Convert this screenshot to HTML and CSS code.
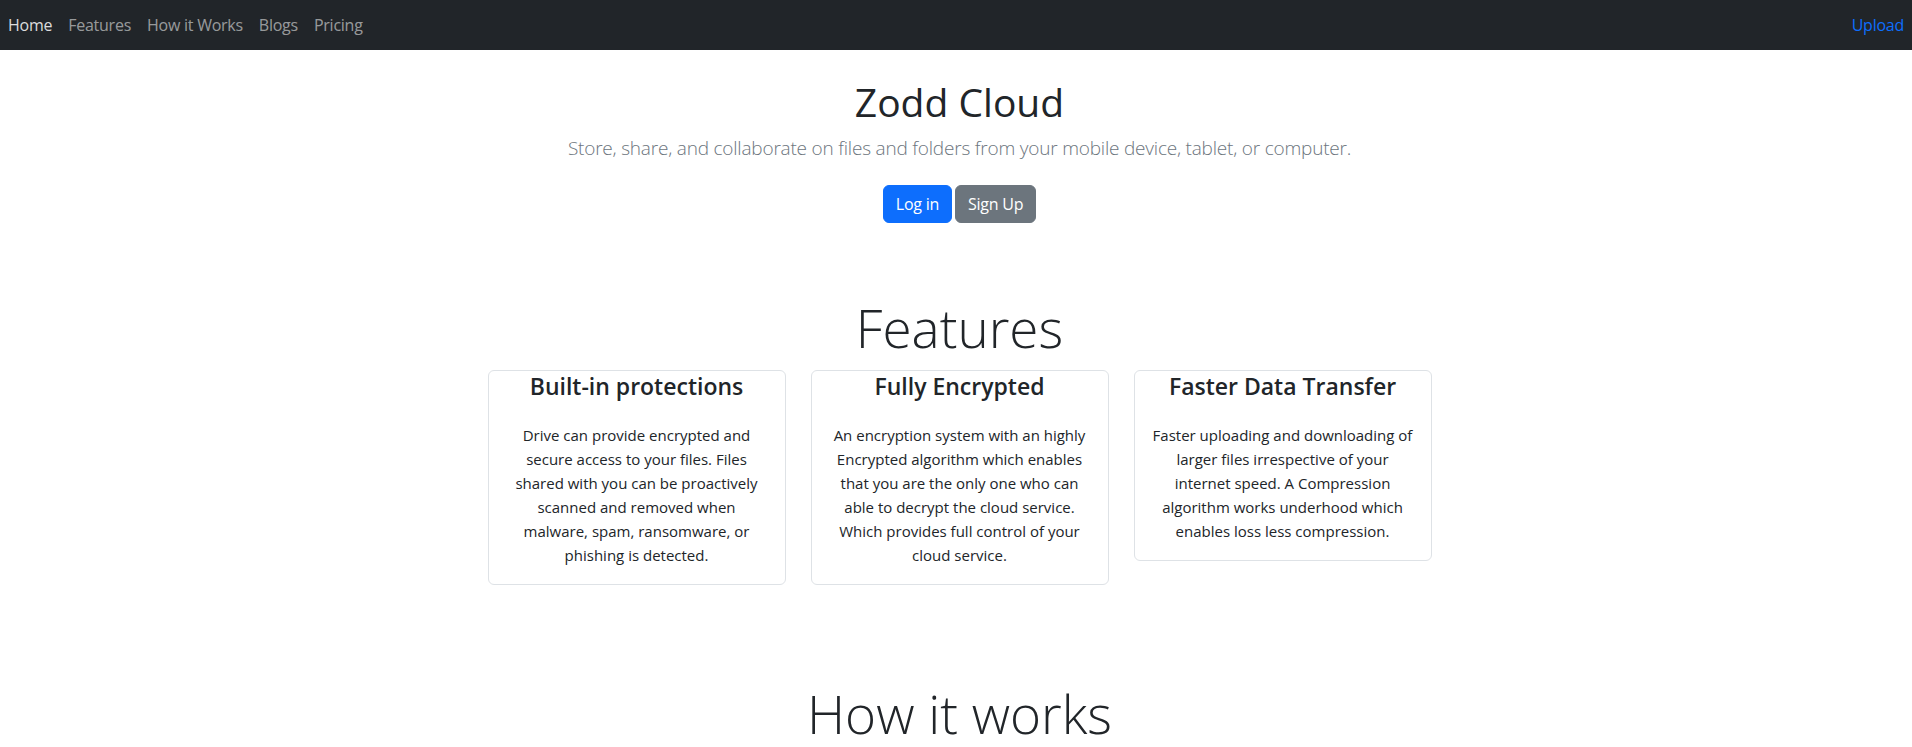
FILE: index.html
```html
<!DOCTYPE html>
<html lang="en">
<head>
<meta charset="utf-8">
<title>Zodd Cloud</title>
<link rel="stylesheet" href="styles.css">
</head>
<body>
<nav class="navbar">
  <ul class="nav-links">
    <li><a class="nav-link active" href="#">Home</a></li>
    <li><a class="nav-link" href="#">Features</a></li>
    <li><a class="nav-link" href="#">How it Works</a></li>
    <li><a class="nav-link" href="#">Blogs</a></li>
    <li><a class="nav-link" href="#">Pricing</a></li>
  </ul>
  <a class="nav-upload" href="#">Upload</a>
</nav>

<main class="page">
  <header class="hero">
    <h1 class="hero-title">Zodd Cloud</h1>
    <p class="lead">Store, share, and collaborate on files and folders from your mobile device, tablet, or computer.</p>
    <div class="actions">
      <a class="btn btn-primary" href="#">Log in</a>
      <a class="btn btn-secondary" href="#">Sign Up</a>
    </div>
  </header>

  <section class="features">
    <h2 class="display">Features</h2>
    <div class="cards">
      <div class="card">
        <h3 class="card-title">Built-in protections</h3>
        <p class="card-text">Drive can provide encrypted and secure access to your files. Files shared with you can be proactively scanned and removed when malware, spam, ransomware, or phishing is detected.</p>
      </div>
      <div class="card">
        <h3 class="card-title">Fully Encrypted</h3>
        <p class="card-text">An encryption system with an highly Encrypted algorithm which enables that you are the only one who can able to decrypt the cloud service. Which provides full control of your cloud service.</p>
      </div>
      <div class="card">
        <h3 class="card-title">Faster Data Transfer</h3>
        <p class="card-text">Faster uploading and downloading of larger files irrespective of your internet speed. A Compression algorithm works underhood which enables loss less compression.</p>
      </div>
    </div>
  </section>

  <section class="how">
    <h2 class="display">How it works</h2>
  </section>
</main>
</body>
</html>
```

FILE: styles.css
```css
* { box-sizing: border-box; }
html, body { margin: 0; padding: 0; }
body {
  font-family: "Open Sans", "Noto Sans", sans-serif;
  font-size: 16px;
  line-height: 1.5;
  color: #212529;
  background: #fff;
  overflow: hidden;
}
a { text-decoration: none; }

.navbar {
  height: 50px;
  background: #212529;
  display: flex;
  align-items: center;
  justify-content: space-between;
  padding: 0 8px 0 0;
}
.nav-links {
  list-style: none;
  margin: 0;
  padding: 0;
  display: flex;
}
.nav-link {
  display: block;
  padding: 8px 8px;
  letter-spacing: -0.25px;
  color: rgba(255, 255, 255, 0.55);
}
.nav-link.active { color: rgba(255, 255, 255, 0.85); }
.nav-upload { color: #0d6efd; letter-spacing: -0.25px; }

.page { padding-left: 7px; }

.hero {
  text-align: center;
  padding-top: 29px;
}
.hero-title {
  margin: 0 0 8px;
  font-size: 39px;
  font-weight: 400;
  line-height: 1.2;
  color: #212529;
}
.lead {
  margin: 0 0 23px;
  font-size: 19px;
  line-height: 1.5;
  letter-spacing: -0.2px;
  font-weight: 300;
  color: #6c757d;
}
.actions {
  display: flex;
  justify-content: center;
  gap: 3px;
}
.btn {
  display: inline-block;
  padding: 6px 12px;
  font-size: 16px;
  line-height: 1.5;
  letter-spacing: -0.25px;
  border-radius: 6px;
  color: #fff;
  border: 1px solid transparent;
}
.btn-primary { background: #0d6efd; border-color: #0d6efd; }
.btn-secondary { background: #6c757d; border-color: #6c757d; }

.features { margin-top: 73px; text-align: center; }
.display {
  margin: 0;
  font-size: 53px;
  font-weight: 300;
  line-height: 1.2;
}
.cards {
  display: flex;
  justify-content: center;
  align-items: flex-start;
  gap: 25px;
  margin-top: 10px;
}
.card {
  width: 298px;
  border: 1px solid #dee2e6;
  border-radius: 6px;
  padding: 2px 16px 17px;
}
.card-title {
  margin: 0 0 23px;
  font-size: 23px;
  font-weight: 600;
  line-height: 1.2;
}
.card-text {
  margin: 0;
  font-size: 15px;
  line-height: 24px;
}

.how { margin-top: 97px; text-align: center; }
```
